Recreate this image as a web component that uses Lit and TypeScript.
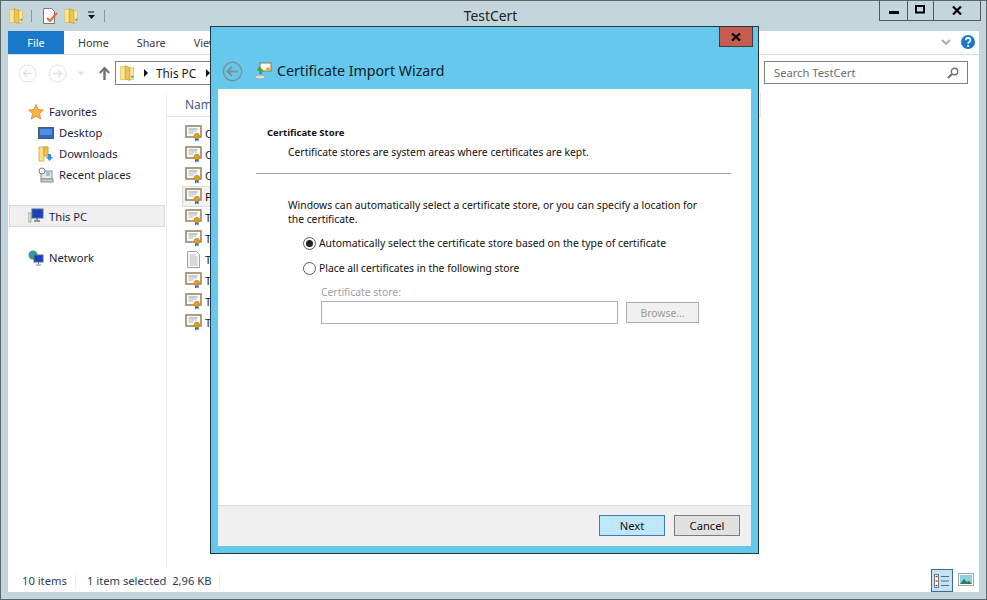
import { LitElement, html, css, svg } from 'lit';
import { customElement } from 'lit/decorators.js';

const folder = (s = 16) => svg`<svg width=${s} height=${s + 2} viewBox="0 0 16 18">
  <path d="M.5 1.500h6v15h-6z" fill="#f7e596" stroke="#dcbc5c" stroke-width=".8"/>
  <path d="M6 .5l5.500 2.500v14.500l-5.500-1.500z" fill="#f0c44e" stroke="#c99a2e" stroke-width=".8"/>
  <path d="M11.500 3h4v13.500h-4z" fill="#fbe9a8" stroke="#d9b654" stroke-width=".8"/>
  <path d="M13 12h2v2.500h-2z" fill="#3b9ad6"/>
</svg>`;

const cert = svg`<svg width="17" height="17" viewBox="0 0 17 17">
  <rect x="1" y="1" width="15" height="11" fill="#fdfbf4" stroke="#9c8663" stroke-width="1.600"/>
  <path d="M3.500 4h9" stroke="#7d9cc4"/><path d="M3.500 6h8M3.500 8h5" stroke="#a8b6c8"/>
  <path d="M10 12.500v4l1.800-1.200 1.800 1.200v-4z" fill="#2a6fd0"/>
  <circle cx="11.800" cy="11" r="2.700" fill="#e0a020" stroke="#b07a10" stroke-width=".6"/>
</svg>`;

const textDoc = svg`<svg width="17" height="17" viewBox="0 0 17 17">
  <path d="M2.500.500h9l3 3v13h-12z" fill="#fafafa" stroke="#a0a0a0"/>
  <path d="M4.500 4h6M4.500 6h8M4.500 8h8M4.500 10h8M4.500 12h8M4.500 14h8" stroke="#b8b8b8"/>
</svg>`;

const FILES = ['C', 'C', 'C', 'P', 'T', 'T', 'T', 'T', 'T', 'T'];

@customElement('app-root')
export class AppRoot extends LitElement {
  static styles = css`
    :host {
      display: block;
      position: relative;
      width: 987px;
      height: 600px;
      overflow: hidden;
      font-family: 'Noto Sans', sans-serif;
      font-size: 11.2px;
      color: #1a1a1a;
    }

    .window {
      box-sizing: border-box;
      height: 600px;
      display: flex;
      flex-direction: column;
      background: #c3d6dc;
      border: 1px solid #5d676e;
      padding: 0 7px 7px;
    }

    .titlebar {
      height: 30px;
      flex: none;
      display: grid;
      grid-template-columns: 1fr auto 1fr;
      align-items: start;
    }
    .qat {
      display: flex;
      align-items: center;
      height: 29px;
      padding-left: 1px;
    }
    .qat .sep { width: 1px; height: 12px; background: #8a979d; }
    .title {
      font-size: 13.8px;
      color: #222;
      line-height: 20px;
      padding-top: 5px;
      transform: translateX(-3px);
    }
    .caption {
      justify-self: end;
      display: flex;
      height: 21px;
      margin: -1px -2px 0 0;
      border: 1px solid #4d585f;
      border-top: 0;
      box-sizing: border-box;
    }
    .caption div {
      display: flex;
      align-items: center;
      justify-content: center;
      border-left: 1px solid #4d585f;
    }
    .caption div:first-child { border-left: 0; width: 27px; }
    .caption .max { width: 25px; }
    .caption .cls { width: 46px; }

    .client {
      flex: 1;
      min-height: 0;
      display: flex;
      flex-direction: column;
      background: #fff;
    }
    .tabs {
      height: 23px;
      flex: none;
      display: flex;
      align-items: center;
      border-bottom: 1px solid #dadbdc;
      color: #3a3a3a;
      font-size: 10.8px;
    }
    .tab-file {
      width: 56px;
      height: 23px;
      background: #1a78cb;
      color: #fff;
      display: flex;
      align-items: center;
      justify-content: center;
    }
    .tab { margin: 0 14px; white-space: nowrap; }
    .tab-end {
      margin-left: auto;
      display: flex;
      align-items: center;
      gap: 10px;
      padding: 0 4px 2px 0;
    }

    .nav {
      height: 37px;
      flex: none;
      display: flex;
      align-items: flex-start;
      padding-top: 6px;
      box-sizing: border-box;
    }
    .nav-btns {
      display: flex;
      align-items: center;
      height: 24px;
      padding-left: 10px;
      width: 107px;
      box-sizing: border-box;
    }
    .address {
      width: 625px;
      height: 24px;
      flex: none;
      box-sizing: border-box;
      border: 1px solid #7f7f7f;
      display: flex;
      align-items: center;
      gap: 8px;
      padding-left: 4px;
      font-size: 11.8px;
    }
    .tri {
      width: 0;
      height: 0;
      border-left: 4px solid #111;
      border-top: 4px solid transparent;
      border-bottom: 4px solid transparent;
      margin-left: 2px;
    }
    .search {
      margin-left: 24px;
      width: 204px;
      height: 23px;
      box-sizing: border-box;
      border: 1px solid #7f7f7f;
      display: flex;
      align-items: center;
      justify-content: space-between;
      padding: 0 8px 0 9px;
      color: #6d6d6d;
    }

    .body {
      flex: 1;
      min-height: 0;
      display: flex;
    }
    .sidebar {
      width: 158px;
      flex: none;
      border-right: 1px solid #eeeeee;
      padding-top: 9px;
      color: #1c1c3a;
    }
    .nav-item {
      display: flex;
      align-items: center;
      height: 21px;
      gap: 5px;
      padding-left: 19px;
      margin: 0 1px;
      box-sizing: border-box;
    }
    .nav-item.sub { padding-left: 29px; }
    .nav-item.selected {
      background: #f0f0f0;
      border: 1px solid #d8d8d8;
      padding-left: 18px;
      height: 22px;
    }
    .nav-gap { height: 20px; }
    .nav-ico { width: 16px; height: 16px; flex: none; }

    .list { flex: 1; padding-top: 1px; }
    .list-head {
      width: 594px;
      height: 24px;
      border-bottom: 1px solid #e5e5e5;
      border-right: 1px solid #e3e5f0;
      display: flex;
      align-items: center;
      padding-left: 18px;
      color: #4c607a;
      font-size: 12px;
      box-sizing: border-box;
    }
    .rows { padding-top: 6px; }
    .row {
      width: 300px;
      height: 21px;
      display: flex;
      align-items: center;
      gap: 3px;
      margin-left: 15px;
      padding-left: 3px;
      box-sizing: border-box;
    }
    .row.selected {
      background: #f2f2f2;
      border: 1px solid #dcdcdc;
      padding-left: 2px;
    }

    .status {
      height: 23px;
      flex: none;
      display: flex;
      align-items: center;
      color: #2c3a5a;
    }
    .status .s1 { padding-left: 14px; width: 68px; box-sizing: border-box; border-right: 1px solid #eeeeee; }
    .status .s2 { padding-left: 11px; width: 144px; box-sizing: border-box; border-right: 1px solid #eeeeee; white-space: nowrap; }
    .views { margin-left: auto; display: flex; align-items: center; height: 23px; padding-right: 5px; gap: 2px; }
    .view-on {
      width: 22px;
      height: 23px;
      box-sizing: border-box;
      background: #c5e2f8;
      border: 1px solid #2f6da4;
      display: flex;
      align-items: center;
      justify-content: center;
    }

    /* wizard dialog sits over the explorer window */
    .dialog {
      position: absolute;
      left: 210px;
      top: 26px;
      width: 549px;
      height: 528px;
      box-sizing: border-box;
      background: #66c8ec;
      border: 1px solid #263640;
      display: flex;
      flex-direction: column;
      padding: 0 7px 7px;
    }
    .dlg-close {
      position: absolute;
      right: 5px;
      top: 0;
      width: 34px;
      height: 20px;
      box-sizing: border-box;
      background: #c65c50;
      border: 1px solid #3c3c3c;
      border-top: 0;
      display: flex;
      align-items: center;
      justify-content: center;
    }
    .dlg-head {
      height: 62px;
      flex: none;
      display: flex;
      align-items: flex-end;
      padding: 0 0 7px 5px;
      box-sizing: border-box;
      margin-left: -1px;
      gap: 11px;
    }
    .dlg-title {
      font-size: 14.2px;
      color: #10202a;
      line-height: 22px;
      margin-left: -6px;
    }
    .dlg-body {
      flex: 1;
      background: #fff;
      display: flex;
      flex-direction: column;
      min-height: 0;
    }
    .content {
      flex: 1;
      padding: 36px 20px 0 49px;
      font-size: 10.35px;
      color: #111;
    }
    .heading { font-weight: 700; font-size: 9.5px; line-height: 16px; margin: 0; }
    .lead { margin: 3px 0 0 21px; line-height: 16px; }
    .rule { height: 1px; background: #a0a0a0; margin: 13px 0 24px -11px; }
    .intro { margin: 0 30px 0 21px; line-height: 14px; }
    .radios { margin: 9px 0 0 36px; display: flex; flex-direction: column; gap: 9px; }
    .radio { display: flex; align-items: center; gap: 3px; height: 16px; }
    .store { margin: 8px 0 0 54px; color: #a0a0a0; }
    .store label { display: block; line-height: 16px; }
    .store-row { display: flex; gap: 8px; margin-top: 1px; }
    .field { width: 297px; height: 23px; box-sizing: border-box; border: 1px solid #adadad; background: #fff; }
    .browse {
      width: 73px;
      height: 21px;
      box-sizing: border-box;
      margin: 1px 0 0;
      border: 1px solid #adadad;
      background: #f0f0f0;
      color: #9a9a9a;
      display: flex;
      align-items: center;
      justify-content: center;
    }
    .footer {
      height: 41px;
      flex: none;
      box-sizing: border-box;
      background: #f0f0f0;
      border-top: 1px solid #dfdfdf;
      display: flex;
      justify-content: flex-end;
      align-items: flex-start;
      gap: 9px;
      padding: 9px 11px 0 0;
      font-size: 11.2px;
    }
    .btn {
      width: 66px;
      height: 21px;
      box-sizing: border-box;
      background: #e1e1e1;
      border: 1px solid #7a7a7a;
      display: flex;
      align-items: center;
      justify-content: center;
      color: #111;
    }
    .btn.primary { background: #bee6fd; border-color: #3c7fb1; }
  `;

  private renderTitlebar() {
    return html`
      <div class="titlebar">
        <div class="qat">
          ${folder(14)}
          <span class="sep" style="margin:0 10px 0 8px"></span>
          <svg width="16" height="16" viewBox="0 0 16 16">
            <path d="M1.500.500h8l3 3v12h-11z" fill="#fff" stroke="#777"/>
            <path d="M5 10l3 3 7-8" fill="none" stroke="#e8693a" stroke-width="2.200"/>
          </svg>
          <span style="width:6px"></span>
          ${folder(14)}
          <svg width="10" height="10" viewBox="0 0 10 10" style="margin-left:8px">
            <path d="M2 1h6" stroke="#111"/><path d="M2 4h7L5.500 8z" fill="#111"/>
          </svg>
          <span class="sep" style="margin-left:8px"></span>
        </div>
        <div class="title">TestCert</div>
        <div class="caption">
          <div>
            <svg width="10" height="10" viewBox="0 0 10 10"><rect y="6" width="10" height="3" fill="#000"/></svg>
          </div>
          <div class="max">
            <svg width="11" height="10" viewBox="0 0 11 10"><rect x="1" y="1" width="8" height="6.500" fill="none" stroke="#000" stroke-width="2"/></svg>
          </div>
          <div class="cls">
            <svg width="10" height="9" viewBox="0 0 10 9"><path d="M1 .500l8 8M9 .500l-8 8" stroke="#000" stroke-width="2.200"/></svg>
          </div>
        </div>
      </div>
    `;
  }

  private renderNav() {
    return html`
      <div class="nav">
        <div class="nav-btns">
          <svg width="19" height="19" viewBox="0 0 19 19"><circle cx="9.500" cy="9.500" r="8.500" fill="none" stroke="#dfe3e6"/><path d="M14 9.500H6M9 6L5.500 9.500 9 13" fill="none" stroke="#dfe3e6" stroke-width="1.500"/></svg>
          <svg width="19" height="19" viewBox="0 0 19 19" style="margin-left:11px"><circle cx="9.500" cy="9.500" r="8.500" fill="none" stroke="#dfe3e6"/><path d="M5 9.500h8M10 6l3.500 3.500L10 13" fill="none" stroke="#dfe3e6" stroke-width="1.500"/></svg>
          <svg width="8" height="5" viewBox="0 0 8 5" style="margin-left:10px"><path d="M.5.500h7L4 4.500z" fill="#dfe3e6"/></svg>
          <svg width="11" height="13" viewBox="0 0 11 13" style="margin-left:14px"><path d="M5.500 1v12" stroke="#6f6f6f" stroke-width="2.400"/><path d="M.8 6l4.700-5 4.700 5" fill="none" stroke="#6f6f6f" stroke-width="2"/></svg>
        </div>
        <div class="address">
          ${folder(14)}
          <span class="tri"></span>
          <span>This PC</span>
          <span class="tri"></span>
        </div>
        <div class="search">
          <span>Search TestCert</span>
          <svg width="12" height="12" viewBox="0 0 12 12"><circle cx="7.500" cy="4.500" r="3.200" fill="none" stroke="#707070" stroke-width="1.400"/><path d="M5 7l-4 4" stroke="#707070" stroke-width="2"/></svg>
        </div>
      </div>
    `;
  }

  private renderSidebar() {
    return html`
      <div class="sidebar">
        <div class="nav-item">
          <svg class="nav-ico" viewBox="0 0 16 16"><path d="M8 .500l2.200 5 5.300.500-4 3.600 1.200 5.400L8 12.200 3.300 15l1.200-5.400-4-3.600 5.300-.500z" fill="#f9b348" stroke="#e2832a" stroke-width=".8"/></svg>
          <span>Favorites</span>
        </div>
        <div class="nav-item sub">
          <svg class="nav-ico" viewBox="0 0 16 16"><rect x=".5" y="2.500" width="15" height="11" fill="#2f66c4" stroke="#4b5a72"/><rect x="2" y="4" width="12" height="6" fill="#4d8fe0"/></svg>
          <span>Desktop</span>
        </div>
        <div class="nav-item sub">
          <svg class="nav-ico" viewBox="0 0 16 16"><path d="M1 1h5v14H1z" fill="#f5e08e" stroke="#d9b654"/><path d="M6 1h4v9H6z" fill="#f0c44e" stroke="#c99a2e"/><path d="M10 8h3v3h2l-3.500 4L8 11h2z" fill="#2f8fe0"/></svg>
          <span>Downloads</span>
        </div>
        <div class="nav-item sub">
          <svg class="nav-ico" viewBox="0 0 16 16"><rect x="3" y="4" width="11" height="8" fill="#e4eaee" stroke="#8a9298"/><rect x="3" y="12" width="12" height="3" fill="#c8ced2" stroke="#8a9298"/><circle cx="4" cy="4" r="3" fill="#fff" stroke="#7a7a7a"/><path d="M8 6h4M8 8h4" stroke="#5a9ad0"/></svg>
          <span>Recent places</span>
        </div>
        <div class="nav-gap"></div>
        <div class="nav-item selected">
          <svg class="nav-ico" viewBox="0 0 16 16"><rect x="0" y="5" width="3" height="9" fill="#d8e4d8" stroke="#7a8a7a" stroke-width=".6"/><rect x="4" y="1" width="11" height="9" fill="#1c3fc0" stroke="#5a6a80"/><path d="M9 10v2M6 13h6" stroke="#6a7a8a" stroke-width="1.500"/></svg>
          <span>This PC</span>
        </div>
        <div class="nav-gap"></div>
        <div class="nav-item">
          <svg class="nav-ico" viewBox="0 0 16 16"><circle cx="5" cy="5" r="4.500" fill="#3aa060"/><path d="M2 3h4v3H2z" fill="#3f8fe0"/><rect x="6" y="5" width="9" height="7" fill="#1c3fc0" stroke="#5a6a80"/><path d="M10.500 12v2M8 15h5" stroke="#6a7a8a"/></svg>
          <span>Network</span>
        </div>
      </div>
    `;
  }

  private renderList() {
    return html`
      <div class="list">
        <div class="list-head">Name</div>
        <div class="rows">
          ${FILES.map(
            (f, i) => html`
              <div class="row ${i === 3 ? 'selected' : ''}">
                ${i === 6 ? textDoc : cert}<span>${f}</span>
              </div>
            `,
          )}
        </div>
      </div>
    `;
  }

  private renderDialog() {
    return html`
      <div class="dialog">
        <div class="dlg-close">
          <svg width="10" height="8" viewBox="0 0 10 8"><path d="M1 .500l8 7M9 .500l-8 7" stroke="#000" stroke-width="2.200"/></svg>
        </div>
        <div class="dlg-head">
          <svg width="21" height="21" viewBox="0 0 21 21"><circle cx="10.500" cy="10.500" r="9.200" fill="none" stroke="#7d8f98" stroke-width="1.400"/><path d="M16 10.500H6M10 6l-4.500 4.500L10 15" fill="none" stroke="#7d8f98" stroke-width="2"/></svg>
          <svg width="18" height="18" viewBox="0 0 18 18" style="margin-bottom:2px"><rect x="6" y="1" width="11" height="8" fill="#fdf6ea" stroke="#8a7a60"/><circle cx="14" cy="7" r="1.800" fill="#e0a020"/><path d="M5 4L3 9h2v3h3V9h2z" fill="#3fa84a"/><ellipse cx="6" cy="15" rx="5" ry="2" fill="#d8dde0" stroke="#8a9298" stroke-width=".6"/></svg>
          <span class="dlg-title">Certificate Import Wizard</span>
        </div>
        <div class="dlg-body">
          <div class="content">
            <p class="heading">Certificate Store</p>
            <p class="lead">Certificate stores are system areas where certificates are kept.</p>
            <div class="rule"></div>
            <p class="intro">Windows can automatically select a certificate store, or you can specify a location for the certificate.</p>
            <div class="radios">
              <div class="radio">
                <svg width="13" height="13" viewBox="0 0 13 13"><circle cx="6.500" cy="6.500" r="6" fill="#fff" stroke="#5a5a5a"/><circle cx="6.500" cy="6.500" r="3.500" fill="#222"/></svg>
                <span>Automatically select the certificate store based on the type of certificate</span>
              </div>
              <div class="radio">
                <svg width="13" height="13" viewBox="0 0 13 13"><circle cx="6.500" cy="6.500" r="6" fill="#fff" stroke="#5a5a5a"/></svg>
                <span>Place all certificates in the following store</span>
              </div>
            </div>
            <div class="store">
              <label>Certificate store:</label>
              <div class="store-row">
                <div class="field"></div>
                <div class="browse">Browse...</div>
              </div>
            </div>
          </div>
          <div class="footer">
            <div class="btn primary">Next</div>
            <div class="btn">Cancel</div>
          </div>
        </div>
      </div>
    `;
  }

  render() {
    return html`
      <div class="window">
        ${this.renderTitlebar()}
        <div class="client">
          <div class="tabs">
            <div class="tab-file">File</div>
            <span class="tab">Home</span>
            <span class="tab">Share</span>
            <span class="tab">View</span>
            <div class="tab-end">
              <svg width="10" height="6" viewBox="0 0 10 6"><path d="M1 1l4 4 4-4" fill="none" stroke="#a8a8a8" stroke-width="1.800"/></svg>
              <svg width="14" height="14" viewBox="0 0 14 14">
                <circle cx="7" cy="7" r="7" fill="#1a78cb"/>
                <path d="M4.800 5.200c0-3 4.600-3 4.600 0 0 1.800-2.300 1.800-2.300 3.600" fill="none" stroke="#fff" stroke-width="1.700"/>
                <rect x="6.200" y="10" width="1.800" height="1.800" fill="#fff"/>
              </svg>
            </div>
          </div>
          ${this.renderNav()}
          <div class="body">
            ${this.renderSidebar()} ${this.renderList()}
          </div>
          <div class="status">
            <div class="s1">10 items</div>
            <div class="s2">1 item selected&nbsp; 2,96 KB</div>
            <div class="views">
              <div class="view-on">
                <svg width="16" height="14" viewBox="0 0 16 14">
                  <rect x=".5" y=".5" width="4" height="13" fill="#fff" stroke="#777"/>
                  <path d="M1.500 2.500h2" stroke="#555" stroke-width="1.500"/>
                  <path d="M1.500 7h2" stroke="#d03030" stroke-width="1.500"/>
                  <path d="M1.500 11.500h2" stroke="#555" stroke-width="1.500"/>
                  <path d="M7 2.500h8M7 7h8M7 11.500h8" stroke="#5a6a7a" stroke-width="1"/>
                </svg>
              </div>
              <svg width="16" height="14" viewBox="0 0 16 14" style="margin-left:3px;margin-top:-1px">
                <rect x=".5" y=".5" width="15" height="12" fill="#fff" stroke="#9aa8b0"/>
                <rect x="2" y="2" width="12" height="9" fill="#8fd0e0"/>
                <path d="M2 11l4-5 3 3 2-1 3 3z" fill="#2f7a5a"/>
              </svg>
            </div>
          </div>
        </div>
      </div>
      ${this.renderDialog()}
    `;
  }
}
